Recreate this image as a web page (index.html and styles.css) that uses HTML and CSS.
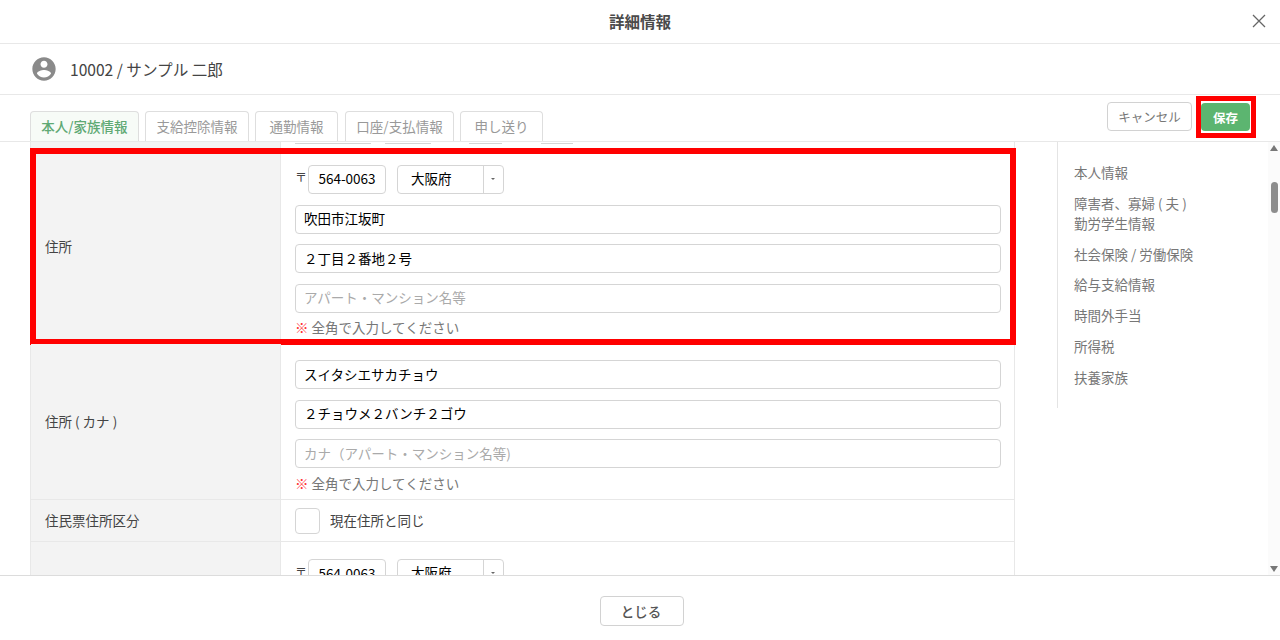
FILE: index.html
```html
<!DOCTYPE html>
<html lang="ja">
<head>
<meta charset="utf-8">
<title>詳細情報</title>
<link rel="stylesheet" href="styles.css">
</head>
<body>
<div class="modal">
  <header class="head">
    <h1 class="title">詳細情報</h1>
    <button class="close" aria-label="閉じる">
      <svg width="14" height="14" viewBox="0 0 14 14"><path d="M1 1L13 13M13 1L1 13" stroke="#666" stroke-width="1.3" fill="none"/></svg>
    </button>
  </header>
  <div class="profile">
    <svg class="avatar" width="28" height="28" viewBox="0 0 24 24"><path fill="#8a8a8a" d="M12 2C6.48 2 2 6.48 2 12s4.48 10 10 10 10-4.48 10-10S17.52 2 12 2zm0 3c1.66 0 3 1.34 3 3s-1.34 3-3 3-3-1.34-3-3 1.34-3 3-3zm0 14.2c-2.5 0-4.71-1.28-6-3.22.03-1.99 4-3.08 6-3.08 1.99 0 5.97 1.09 6 3.08-1.29 1.94-3.5 3.22-6 3.22z"/></svg>
    <span class="profile-name">10002 / サンプル 二郎</span>
  </div>
  <div class="tabbar">
    <nav class="tabs">
      <a class="tab tab-active">本人/家族情報</a>
      <a class="tab">支給控除情報</a>
      <a class="tab tab-short">通勤情報</a>
      <a class="tab tab-wide">口座/支払情報</a>
      <a class="tab tab-short">申し送り</a>
    </nav>
    <div class="actions">
      <button class="btn btn-cancel">キャンセル</button>
      <div class="save-wrap">
        <button class="btn btn-save">保存</button>
        <span class="mark mark-save"></span>
      </div>
    </div>
  </div>
  <div class="body">
    <main class="main">
      <div class="form">
        <div class="row row-prev">
          <div class="label"></div>
          <div class="field prev-field">
            <span class="stub stub-1"></span>
            <span class="stub stub-2"></span>
            <span class="stub stub-3"></span>
            <span class="stub stub-4"></span>
          </div>
        </div>
        <div class="row row-address">
          <div class="label">住所</div>
          <div class="field stack">
            <div class="postal">
              <span class="zip-mark">〒</span>
              <input class="input input-zip" value="564-0063">
              <div class="select"><span class="select-value">大阪府</span><span class="select-arrow"></span></div>
            </div>
            <input class="input" value="吹田市江坂町">
            <input class="input" value="２丁目２番地２号">
            <input class="input" placeholder="アパート・マンション名等">
            <p class="note"><span class="note-mark">※</span> 全角で入力してください</p>
          </div>
          <span class="mark mark-address"></span>
        </div>
        <div class="row row-kana">
          <div class="label">住所 ( カナ )</div>
          <div class="field stack">
            <input class="input" value="スイタシエサカチョウ">
            <input class="input" value="２チョウメ２バンチ２ゴウ">
            <input class="input" placeholder="カナ（アパート・マンション名等)">
            <p class="note"><span class="note-mark">※</span> 全角で入力してください</p>
          </div>
        </div>
        <div class="row row-check">
          <div class="label">住民票住所区分</div>
          <label class="field check-field"><span class="checkbox"></span><span class="check-text">現在住所と同じ</span></label>
        </div>
        <div class="row row-last">
          <div class="label"></div>
          <div class="field stack">
            <div class="postal">
              <span class="zip-mark">〒</span>
              <input class="input input-zip" value="564-0063">
              <div class="select"><span class="select-value">大阪府</span><span class="select-arrow"></span></div>
            </div>
          </div>
        </div>
      </div>
    </main>
    <aside class="side">
      <ul class="side-nav">
        <li>本人情報</li>
        <li>障害者、寡婦 ( 夫 )<br>勤労学生情報</li>
        <li>社会保険 / 労働保険</li>
        <li>給与支給情報</li>
        <li>時間外手当</li>
        <li>所得税</li>
        <li>扶養家族</li>
      </ul>
    </aside>
    <div class="scrollbar">
      <span class="arrow arrow-up"></span>
      <span class="thumb"></span>
      <span class="arrow arrow-down"></span>
    </div>
  </div>
  <footer class="foot">
    <button class="btn btn-close">とじる</button>
  </footer>
</div>
</body>
</html>
```

FILE: styles.css
```css
* { box-sizing: border-box; }
html, body { margin: 0; height: 100%; }
body {
  width: 1280px;
  height: 640px;
  overflow: hidden;
  background: #fff;
  color: #444;
  font-family: "Noto Sans CJK JP", "Noto Sans", sans-serif;
  font-size: 13.5px;
}
.modal { display: flex; flex-direction: column; height: 640px; }

.head {
  height: 44px;
  flex: none;
  display: flex;
  align-items: center;
  justify-content: center;
  padding-bottom: 2px;
  border-bottom: 1px solid #e8e8e8;
  position: relative;
}
.title { margin: 0; font-size: 15.5px; font-weight: 700; color: #4a4a4a; }
.close {
  position: absolute;
  right: 14px;
  top: 14px;
  width: 14px;
  height: 14px;
  padding: 0;
  border: 0;
  background: none;
  display: flex;
}

.profile {
  height: 51px;
  flex: none;
  display: flex;
  align-items: center;
  gap: 12px;
  padding-left: 30px;
  padding-bottom: 1px;
  border-bottom: 1px solid #e8e8e8;
}
.profile-name { font-size: 15.6px; color: #444; }

.tabbar {
  height: 47px;
  flex: none;
  display: flex;
  justify-content: space-between;
  padding: 0 30px;
  border-bottom: 1px solid #e8e8e8;
}
.tabs { display: flex; gap: 6px; padding-top: 16px; }
.tab {
  width: 104px;
  height: 30px;
  display: flex;
  align-items: center;
  justify-content: center;
  padding-bottom: 2px;
  border: 1px solid #dedede;
  border-bottom: 0;
  border-radius: 4px 4px 0 0;
  color: #999;
  font-size: 13.5px;
}
.tab-active { width: 109px; color: #5fa974; font-weight: 500; background: #f7fbf7; }
.tab-short { width: 83px; }
.tab-wide { width: 109px; margin-left: 1px; }

.actions { display: flex; align-items: flex-start; gap: 9px; padding-top: 7px; }
.btn {
  font-family: inherit;
  border-radius: 4px;
  padding: 0;
  display: flex;
  align-items: center;
  justify-content: center;
  font-size: 12.5px;
}
.btn-cancel {
  width: 85px;
  height: 29px;
  background: #fff;
  border: 1px solid #d2d2d2;
  color: #777;
}
.save-wrap { position: relative; margin-top: 1px; }
.btn-save {
  width: 49px;
  height: 28px;
  background: #5cb570;
  border: 0;
  color: #fff;
  font-weight: 700;
}
.mark { position: absolute; border-style: solid; border-color: #f00; pointer-events: none; }
.mark-save { left: -5px; top: -7px; width: 60px; height: 42px; border-width: 5px; }

.body { flex: 1; min-height: 0; display: flex; overflow: hidden; }
.main { width: 1057px; flex: none; padding-left: 30px; overflow: hidden; }
.form { width: 985px; border-right: 1px solid #e8e8e8; border-left: 1px solid #e8e8e8; }
.row { display: flex; position: relative; border-bottom: 1px solid #e8e8e8; }
.label {
  width: 250px;
  flex: none;
  display: flex;
  align-items: center;
  padding: 0 0 2px 14px;
  background: #f3f3f3;
  border-right: 1px solid #e8e8e8;
  color: #444;
}
.field { flex: 1; padding-left: 14px; }
.stack { display: flex; flex-direction: column; }

.row-prev { height: 7px; border-bottom: 0; }
.prev-field { display: flex; position: relative; overflow: hidden; }
.stub {
  height: 2px;
  border-bottom: 1px solid #d5d5d5;
  position: absolute;
  top: 0;
}
.stub-1 { left: 14px; width: 76px; }
.stub-2 { left: 104px; width: 46px; }
.stub-3 { left: 188px; width: 33px; }
.stub-4 { left: 260px; width: 32px; }

.row-address { height: 195px; padding-top: 15.5px; border-bottom: 0; }
.row-address .label { margin-top: -15.5px; }
.row-kana { height: 156px; }
.row-kana .field { padding-top: 16px; }
.row-check { height: 42px; }
.row-last { height: 40px; border-bottom: 0; }
.row-last .field { padding-top: 15px; }
.row-last .postal { padding-top: 2px; height: 31px; }
.mark-address { left: -1px; top: -1px; width: 986px; height: 197px; border-width: 6px; }

.postal { display: flex; align-items: center; height: 29px; margin-bottom: 11px; }
.zip-mark { width: 13px; font-size: 12px; line-height: 12px; padding-bottom: 4px; color: #444; }
.input {
  width: 706px;
  height: 29px;
  flex: none;
  border: 1px solid #d5d5d5;
  border-radius: 4px;
  padding: 0 8px 2px;
  font-family: inherit;
  font-size: 13.5px;
  font-weight: 400;
  color: #000;
  background: #fff;
  outline: none;
  margin-bottom: 10.5px;
}
.input::placeholder { color: #aaa; font-weight: 400; opacity: 1; }
.input-zip { width: 78px; margin: 0 11px 0 0; text-align: center; padding: 0 0 2px; }
.select {
  width: 107px;
  height: 29px;
  display: flex;
  border: 1px solid #d5d5d5;
  border-radius: 4px;
  color: #000;
}
.select-value { width: 86px; padding-left: 13px; line-height: 25px; border-right: 1px solid #d5d5d5; }
.select-arrow { flex: 1; position: relative; }
.select-arrow::after {
  content: "";
  position: absolute;
  left: 7px;
  top: 12px;
  border: 2.5px solid transparent;
  border-top-color: #666;
  border-bottom: 0;
}
.note { margin: -6px 0 0; color: #777; line-height: 20px; }
.note-mark { color: #f33; }

.check-field { display: flex; align-items: center; gap: 10px; color: #444; }
.check-text { padding-bottom: 2px; }
.checkbox {
  width: 25px;
  height: 26px;
  border: 1px solid #d5d5d5;
  border-radius: 4px;
  background: #fff;
}

.side { width: 211px; flex: none; align-self: flex-start; height: 266px; border-left: 1px solid #e4e4e4; }
.side-nav { list-style: none; margin: 0; padding: 20px 0 0 16px; color: #777; line-height: 20px; }
.side-nav li { margin-bottom: 10.75px; }

.scrollbar { flex: 1; position: relative; background: #fbfbfb; }
.thumb { position: absolute; left: 3px; top: 40px; width: 7px; height: 31px; border-radius: 4px; background: #8d8d8d; }
.arrow { position: absolute; left: 2px; width: 0; height: 0; border: 4px solid transparent; }
.arrow-up { top: 3px; border-top: 0; border-bottom: 6px solid #777; }
.arrow-down { bottom: 3px; border-bottom: 0; border-top: 6px solid #777; }

.foot {
  height: 65px;
  flex: none;
  display: flex;
  justify-content: center;
  padding: 20px 0 0 4px;
  border-top: 1px solid #dcdcdc;
}
.btn-close {
  width: 84px;
  height: 30px;
  padding-right: 2px;
  background: #fff;
  border: 1px solid #d2d2d2;
  color: #555;
  font-weight: 500;
  font-size: 13.5px;
}
```
